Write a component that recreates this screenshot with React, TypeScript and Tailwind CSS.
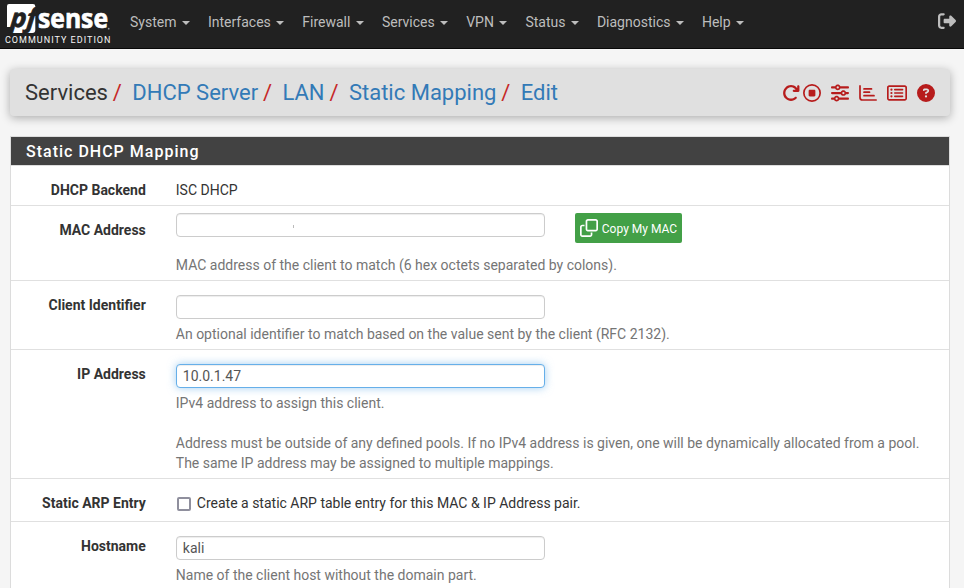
import type { ReactNode } from "react";
import {
  FaArrowRotateRight,
  FaCircleQuestion,
  FaRegCircleStop,
  FaRegClone,
  FaRegRectangleList,
  FaRightFromBracket,
  FaSliders,
} from "react-icons/fa6";

const MENUS = ["System", "Interfaces", "Firewall", "Services", "VPN", "Status", "Diagnostics", "Help"];
const CRUMBS = ["DHCP Server", "LAN", "Static Mapping", "Edit"];

function Logo() {
  return (
    <svg width="120" height="48" viewBox="0 0 120 48" className="block shrink-0">
      <path d="M9 4H33Q35.300 4 35.300 6.300V30Q35.300 33 32.300 33H10L11.500 27L7 27V6Q7 4 9 4Z" fill="#fff" />
      <text transform="translate(10 27.300) skewX(-5)" fontFamily="'Open Sans', sans-serif" fontWeight="700" fontStyle="italic" fontSize="26" fill="#212121" stroke="#212121" strokeWidth="0.700" textLength="26" lengthAdjust="spacingAndGlyphs">pf</text>
      <text x="38" y="27.500" fontFamily="'Open Sans', sans-serif" fontWeight="700" fontSize="26.500" fill="#fff" stroke="#fff" strokeWidth="0.700" textLength="70" lengthAdjust="spacingAndGlyphs">sense</text>
      <circle cx="108.700" cy="28.700" r="0.900" fill="#999" />
      <text x="5" y="43" fontFamily="Roboto, sans-serif" fontSize="9" fill="#f5f5f5" textLength="105.500">COMMUNITY EDITION</text>
    </svg>
  );
}

function BarChart() {
  return (
    <svg width="18" height="16" viewBox="0 0 18 16" fill="none" stroke="currentColor" strokeWidth="1.700" strokeLinecap="round">
      <path d="M1 0.900V12.500Q1 15 3.500 15H17.200M5 3.900H12.500M5 7.200H10.500M5 10.700H15" />
    </svg>
  );
}

function Row({ label, height, children }: { label: string; height: string; children: ReactNode }) {
  return (
    <div className={`flex border-b border-[#e0e0e0] ${height}`}>
      <div className="w-[134.8px] shrink-0 pt-3.5 text-right font-bold">{label}</div>
      <div className="ml-[30px] min-w-0 flex-1">{children}</div>
    </div>
  );
}

function Field({ value = "", focused = false, label }: { value?: string; focused?: boolean; label: string }) {
  return (
    <input
      aria-label={label}
      defaultValue={value}
      className={`block h-6 w-[369px] rounded-[4px] border bg-white px-1.5 text-sm text-[#555] outline-none ${
        focused
          ? "border-[#66afe9] shadow-[inset_0_1px_1px_rgba(0,0,0,0.075),0_0_8px_rgba(102,175,233,0.6)]"
          : "border-[#ccc] shadow-[inset_0_1px_1px_rgba(0,0,0,0.075)]"
      }`}
    />
  );
}

export default function App() {
  return (
    <div className="h-[588px] w-full overflow-hidden bg-[#f5f5f5] font-[Roboto,sans-serif] text-sm leading-5 text-[#333]">
      <nav className="flex h-[49px] border-b border-[#080808] bg-[#212121] text-[#bdbdbd]">
        <Logo />
        <div className="flex h-11 items-center gap-[18.2px] pl-2.5">
          {MENUS.map((m) => (
            <button key={m} className="flex items-center gap-[5.3px]">
              {m}
              <span className="mt-0.5 border-x-4 border-t-4 border-x-transparent border-t-current" />
            </button>
          ))}
        </div>
        <FaRightFromBracket className="mt-3 mr-2 ml-auto size-[18px]" />
      </nav>

      <header className="mr-3.5 ml-2.5 mt-5 flex h-[47px] items-center rounded-[4px] bg-[#e0e0e0] pr-[15px] pl-[15px] text-[22px] shadow-[0_2px_10px_rgba(0,0,0,0.3)]">
        <div className="flex">
          <span>Services</span>
          {CRUMBS.map((c) => (
            <span key={c} className="flex">
              <span className="pr-[10.4px] pl-[4.9px] text-[#c62828]">/</span>
              <a className="text-[#337ab7]">{c}</a>
            </span>
          ))}
        </div>
        <div className="ml-auto flex items-center text-lg text-[#b71c1c]">
          <FaArrowRotateRight />
          <FaRegCircleStop className="ml-[3.5px]" />
          <FaSliders className="ml-2.5" />
          <span className="ml-2.5"><BarChart /></span>
          <FaRegRectangleList className="ml-2.5 size-5" />
          <FaCircleQuestion className="ml-2.5" />
        </div>
      </header>

      <main className="mr-3.5 ml-2.5 mt-5 border border-[#dcdcdc] bg-white">
        <h2 className="h-[29px] border-b border-[#ddd] bg-[#424242] pt-px pl-[15px] text-base leading-7 font-medium tracking-[1px] text-white">
          Static DHCP Mapping
        </h2>
        <Row label="DHCP Backend" height="h-10">
          <p className="pt-3.5">ISC DHCP</p>
        </Row>
        <Row label="MAC Address" height="h-[75px]">
          <div className="flex pt-[7px]">
            <div className="relative">
              <Field label="MAC Address" />
              <span className="absolute top-3 left-[117px] h-[3px] w-px bg-[#bbb]" />
            </div>
            <button className="ml-[30px] flex h-[30px] w-[107px] items-center rounded-[2px] bg-[#43a047] pl-[5px] text-xs text-white">
              <FaRegClone className="mr-1 size-[18px]" />
              <span className="pt-0.5">Copy My MAC</span>
            </button>
          </div>
          <p className="mt-3 text-[#757575]">MAC address of the client to match (6 hex octets separated by colons).</p>
        </Row>
        <Row label="Client Identifier" height="h-[69px]">
          <div className="pt-3.5"><Field label="Client Identifier" /></div>
          <p className="mt-[5px] text-[#757575]">An optional identifier to match based on the value sent by the client (RFC 2132).</p>
        </Row>
        <Row label="IP Address" height="h-[129px]">
          <div className="pt-3.5"><Field label="IP Address" value="10.0.1.47" focused /></div>
          <p className="mt-[5px] text-[#757575]">
            IPv4 address to assign this client.
            <br />
            <br />
            Address must be outside of any defined pools. If no IPv4 address is given, one will be dynamically allocated from a pool.
            <br />
            The same IP address may be assigned to multiple mappings.
          </p>
        </Row>
        <Row label="Static ARP Entry" height="h-[43px]">
          <label className="flex items-center pt-3.5">
            <input type="checkbox" className="mt-0.5 mr-1.5 ml-px size-3.5 appearance-none rounded-[2px] border-2 border-[#8f8f9d] bg-white" />
            Create a static ARP table entry for this MAC &amp; IP Address pair.
          </label>
        </Row>
        <Row label="Hostname" height="h-[90px]">
          <div className="pt-3.5"><Field label="Hostname" value="kali" /></div>
          <p className="mt-[5px] text-[#757575]">Name of the client host without the domain part.</p>
        </Row>
      </main>
    </div>
  );
}
